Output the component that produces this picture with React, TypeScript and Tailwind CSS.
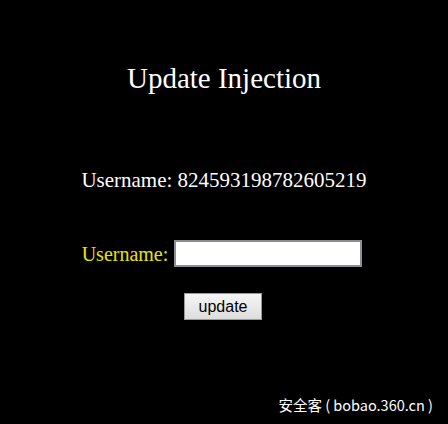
export default function App() {
  return (
    <div className="flex h-[424px] w-[448px] flex-col overflow-hidden bg-black font-['Liberation_Serif',serif] text-white">
      <h1 className="mt-[61px] text-center text-[29px] leading-[34px]">Update Injection</h1>

      <p className="mt-[73px] text-center text-[21px] leading-[24px]">Username: 824593198782605219</p>

      <form className="mt-[48px] flex flex-col items-center" onSubmit={(e) => e.preventDefault()}>
        <div className="flex items-center gap-[6px] pr-[4px]">
          <label className="text-[20px] leading-[24px] text-[#e6e600]">Username:</label>
          <input
            type="text"
            className="h-[27px] w-[188px] border-2 border-[#8c8c94] bg-white px-1 text-black outline-none"
          />
        </div>
        <button
          type="submit"
          className="mt-[26px] mr-[2px] h-[27px] w-[78px] border border-[#9a9a9a] bg-gradient-to-b from-[#f6f6f6] to-[#dddddd] font-['Liberation_Sans',sans-serif] text-[16px] leading-none text-black"
        >
          update
        </button>
      </form>

      <div className="mt-auto mb-[9px] mr-[15px] text-right font-['Noto_Sans_CJK_SC',sans-serif] text-[14.5px] leading-[20px]">
        安全客 ( bobao.360.cn )
      </div>
    </div>
  )
}
